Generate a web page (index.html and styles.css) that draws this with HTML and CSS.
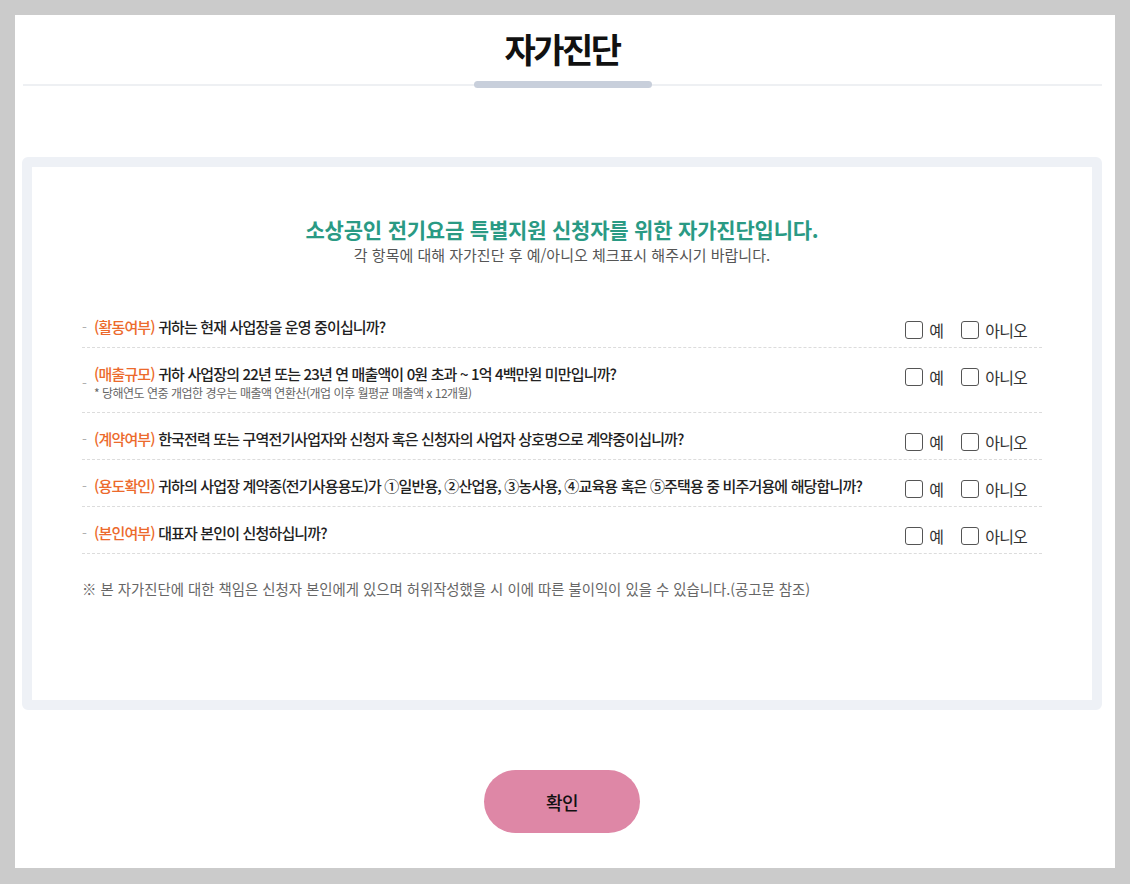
FILE: index.html
```html
<!DOCTYPE html>
<html lang="ko">
<head>
<meta charset="utf-8">
<title>자가진단</title>
<link rel="stylesheet" href="styles.css">
</head>
<body>
<div class="page">
  <header class="head">
    <h1 class="title">자가진단</h1>
    <div class="rule"></div>
  </header>

  <section class="card">
    <h2 class="lead">소상공인 전기요금 특별지원 신청자를 위한 자가진단입니다.</h2>
    <p class="sub">각 항목에 대해 자가진단 후 예/아니오 체크표시 해주시기 바랍니다.</p>

    <ul class="list">
      <li class="row">
        <span class="dash">-</span>
        <div class="q"><p class="qt"><span class="tag">(활동여부)</span> 귀하는 현재 사업장을 운영 중이십니까?</p></div>
        <div class="checks">
          <label class="chk"><span class="box"></span>예</label>
          <label class="chk"><span class="box"></span>아니오</label>
        </div>
      </li>
      <li class="row">
        <span class="dash">-</span>
        <div class="q">
          <p class="qt"><span class="tag">(매출규모)</span> 귀하 사업장의 22년 또는 23년 연 매출액이 0원 초과 ~ 1억 4백만원 미만입니까?</p>
          <p class="note">* 당해연도 연중 개업한 경우는 매출액 연환산(개업 이후 월평균 매출액 x 12개월)</p>
        </div>
        <div class="checks">
          <label class="chk"><span class="box"></span>예</label>
          <label class="chk"><span class="box"></span>아니오</label>
        </div>
      </li>
      <li class="row">
        <span class="dash">-</span>
        <div class="q"><p class="qt"><span class="tag">(계약여부)</span> 한국전력 또는 구역전기사업자와 신청자 혹은 신청자의 사업자 상호명으로 계약중이십니까?</p></div>
        <div class="checks">
          <label class="chk"><span class="box"></span>예</label>
          <label class="chk"><span class="box"></span>아니오</label>
        </div>
      </li>
      <li class="row">
        <span class="dash">-</span>
        <div class="q"><p class="qt"><span class="tag">(용도확인)</span> 귀하의 사업장 계약종(전기사용용도)가 ①일반용, ②산업용, ③농사용, ④교육용 혹은 ⑤주택용 중 비주거용에 해당합니까?</p></div>
        <div class="checks">
          <label class="chk"><span class="box"></span>예</label>
          <label class="chk"><span class="box"></span>아니오</label>
        </div>
      </li>
      <li class="row">
        <span class="dash">-</span>
        <div class="q"><p class="qt"><span class="tag">(본인여부)</span> 대표자 본인이 신청하십니까?</p></div>
        <div class="checks">
          <label class="chk"><span class="box"></span>예</label>
          <label class="chk"><span class="box"></span>아니오</label>
        </div>
      </li>
    </ul>

    <p class="foot">※ 본 자가진단에 대한 책임은 신청자 본인에게 있으며 허위작성했을 시 이에 따른 불이익이 있을 수 있습니다.(공고문 참조)</p>
  </section>

  <div class="actions">
    <button class="btn" type="button">확인</button>
  </div>
</div>
</body>
</html>
```

FILE: styles.css
```css
* { box-sizing: border-box; }
html, body { margin: 0; padding: 0; }
body {
  background: #cbcbcb;
  padding: 15px;
  font-family: "Noto Sans CJK KR", "Noto Sans", sans-serif;
  color: #222;
}
.page {
  width: 1100px;
  height: 853px;
  background: #fff;
  padding: 0 13px 0 7px;
}
.head { padding-top: 14px; }
.title {
  margin: 0;
  text-align: center;
  font-size: 34px;
  line-height: 40px;
  font-weight: 700;
  letter-spacing: -2.5px;
  color: #111;
}
.rule {
  position: relative;
  margin: 15px 0 0 1px;
  height: 2px;
  background: #eef0f3;
}
.rule::after {
  content: "";
  position: absolute;
  left: 451px;
  top: -3px;
  width: 178px;
  height: 7px;
  border-radius: 4px;
  background: #c8cfdb;
}
.card {
  margin-top: 71px;
  border: 10px solid #eef1f6;
  border-radius: 6px;
  padding: 48px 50px 0;
  height: 553px;
}
.lead {
  margin: 0;
  text-align: center;
  font-size: 21px;
  line-height: 28px;
  font-weight: 700;
  letter-spacing: -0.2px;
  color: #2a9a84;
}
.sub {
  margin: 2px 0 0;
  text-align: center;
  font-size: 15px;
  line-height: 20px;
  letter-spacing: 0;
  color: #555;
}
.list {
  list-style: none;
  margin: 36px 0 0;
  padding: 0;
}
.row {
  display: flex;
  align-items: flex-start;
  padding: 17px 15px 11px 0;
  border-bottom: 1px dashed #dcdcdc;
}
.dash {
  align-self: center;
  width: 12px;
  flex: none;
  color: #b0b0b0;
  font-size: 14px;
  line-height: 18px;
}
.q { flex: 1; }
.qt {
  margin: 0;
  font-size: 15px;
  line-height: 18px;
  font-weight: 500;
  letter-spacing: -0.85px;
  color: #222;
}
.tag { color: #ec6a2c; }
.note {
  margin: 2px 0 0;
  font-size: 12px;
  line-height: 16px;
  letter-spacing: -0.5px;
  color: #666;
}
.checks {
  display: flex;
  gap: 18px;
  margin: 3px 0 -3px;
  flex: none;
}
.chk {
  display: flex;
  align-items: center;
  gap: 6px;
  font-size: 16px;
  line-height: 18px;
  letter-spacing: -0.8px;
  color: #333;
}
.box {
  width: 18px;
  height: 18px;
  border: 1px solid #555;
  border-radius: 3px;
  background: #fff;
}
.foot {
  margin: 25px 0 0;
  font-size: 14.4px;
  line-height: 20px;
  letter-spacing: 0;
  color: #666;
}
.actions {
  display: flex;
  justify-content: center;
  margin-top: 60px;
}
.btn {
  width: 156px;
  height: 63px;
  border: 0;
  border-radius: 32px;
  background: #de87a6;
  color: #111;
  font-family: "Noto Sans CJK KR", sans-serif;
  font-size: 18px;
  font-weight: 500;
  letter-spacing: -0.5px;
}
```
